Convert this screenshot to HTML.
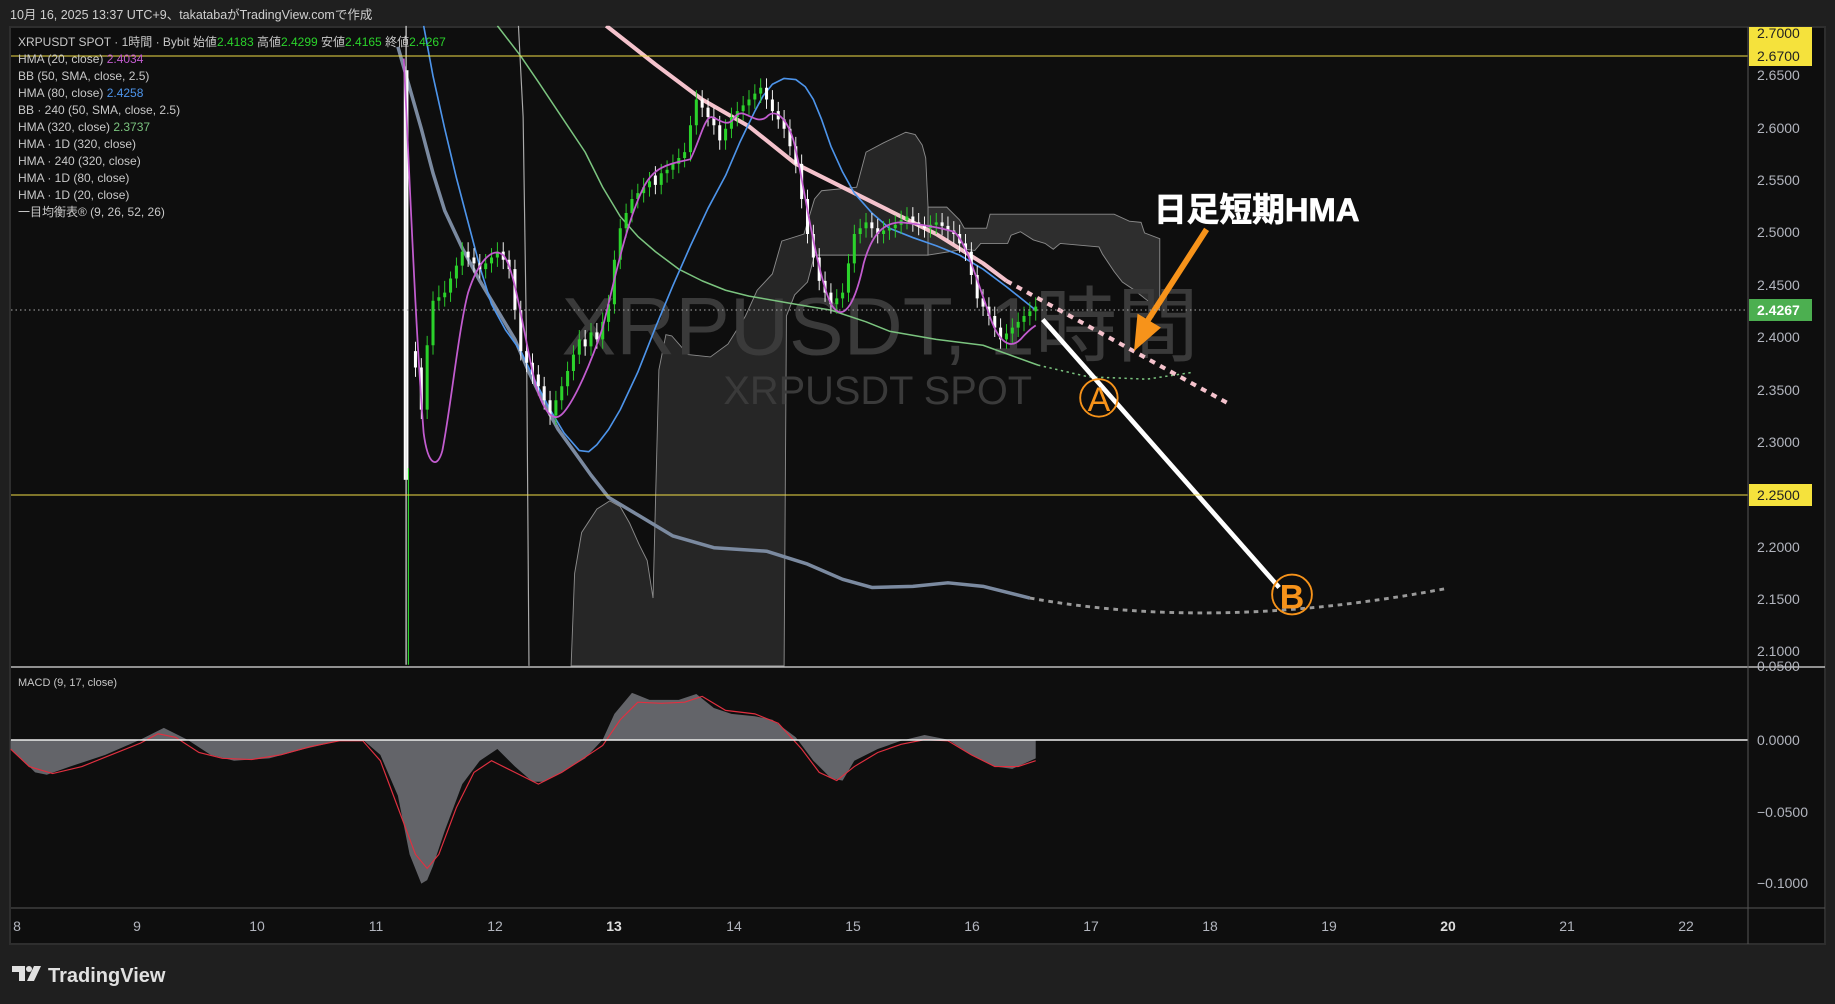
<!DOCTYPE html>
<html><head><meta charset="utf-8"><style>
html,body{margin:0;padding:0;background:#1f1f1f;width:1835px;height:1004px;overflow:hidden}
svg{display:block}
text{font-family:"Liberation Sans","Noto Sans CJK JP",sans-serif}
</style></head><body>
<svg width="1835" height="1004" viewBox="0 0 1835 1004" xmlns="http://www.w3.org/2000/svg">
<defs>
<clipPath id="cp"><rect x="9" y="22" width="1484" height="548"/></clipPath>
<clipPath id="cm"><rect x="9" y="571" width="1484" height="205"/></clipPath>
</defs>
<rect width="1835" height="1004" fill="#1f1f1f"/>
<rect x="10" y="27" width="1815" height="917" fill="#0e0e0e" stroke="#2e2e2e" stroke-width="2"/>
<text x="10" y="19" font-size="12.5" fill="#cfcfcf">10月 16, 2025 13:37 UTC+9、takatabaがTradingView.comで作成</text>

<g transform="scale(1.1703)">
<g clip-path="url(#cp)">
<polygon fill="#262626" stroke="#8a8a8a" stroke-width="0.8" points="488,569 491,490 497,455 510,435 521,428 530,433 538,447 546,465 553,479 558,511 563,316 569,286 574,287 588,303 607,305 622,294 637,270 647,248 660,234 664,220 668,206 687,200 696,170 702,163 732,160 740,130 755,122 774,113 782,115 788,124 791,135 793,177 793,218 696,218 690,241 679,252 672,270 670,569"/>
<polygon fill="#2e2e2e" stroke="#8a8a8a" stroke-width="0.8" points="793,177 809,177 820,188 824,195 843,195 846,183 952,183 965,189 975,190 978,199 991,204 991,265 982,258 968,247 959,241 952,232 942,217 939,211 906,208 900,213 893,208 883,205 872,198 864,201 861,208 838,208 833,214 824,213 793,218"/>
<polyline fill="none" stroke="#aaa" stroke-width="1" points="443,22 447,100 450,300 452,569"/>
<text x="752" y="303" font-size="70" fill="#3a3a3a" text-anchor="middle">XRPUSDT, 1時間</text>
<text x="750" y="345" font-size="34" fill="#3a3a3a" text-anchor="middle">XRPUSDT SPOT</text>
<polyline fill="none" stroke="#7bc47f" stroke-width="1.3" stroke-linejoin="round" points="425,22 445,48 460,70 480,100 500,130 515,160 530,185 545,202 560,215 580,230 600,240 620,248 640,253 680,260 710,265 740,275 760,283 800,290 840,295 887,312"/>
<polyline fill="none" stroke="#7bc47f" stroke-width="1.3" stroke-dasharray="2,3" points="887,312 930,322 980,324 1020,318"/>
<polyline fill="none" stroke="#7b8aa0" stroke-width="3" stroke-linejoin="round" points="340,40 350,75 360,110 370,148 380,180 395,212 410,240 425,265 440,290 452,318 465,345 477,367 490,385 505,406 520,425 545,440 575,458 610,468 655,471 690,482 720,495 745,502 780,501 810,498 840,501 880,511"/>
<path d="M880,511 Q1040,540 1235,503" fill="none" stroke="#9a9a9a" stroke-width="2.5" stroke-dasharray="4,4"/>
<polyline fill="none" stroke="#f4c2cc" stroke-width="3.5" stroke-linejoin="round" points="518,22 560,55 600,85 640,108 680,140 720,160 760,180 800,200 840,225 860,240"/>
<line x1="860" y1="240" x2="1050" y2="345" stroke="#f4c2cc" stroke-width="3.5" stroke-dasharray="5,5"/>
<polyline fill="none" stroke="#4d94ea" stroke-width="1.4" stroke-linejoin="round" points="362,22 370,65 380,110 390,152 400,190 410,228 420,260 432,282 445,300 458,327 470,350 482,370 495,385 503,386 510,380 520,367 530,350 545,318 560,280 575,244 590,210 605,178 620,150 632,122 645,95 652,82 660,72 670,67 680,68 688,74 695,85 702,102 710,125 720,147 730,165 745,182 760,195 780,203 800,210 820,218 840,230 860,245 885,265"/>
<path fill="none" stroke="#2bd22b" stroke-width="0.8" d="M365 287V358M370 249V303M375 244V265M380 240V262M385 232V258M390 220V246M395 207V235M415 217V238M420 212V233M425 207V228M475 334V363M480 322V350M485 309V338M490 295V325M495 282V311M505 276V304M515 267V298M520 252V283M525 214V268M530 187V230M535 174V203M540 162V190M545 157V178M550 152V173M555 147V168M565 140V166M570 137V156M575 132V153M580 127V148M585 122V143M590 99V138M595 77V115M620 102V128M625 92V118M630 87V108M635 82V103M640 77V98M645 72V93M650 67V88M715 247V268M720 242V263M725 217V258M730 192V233M735 187V208M740 182V203M755 189V208M760 187V205M765 184V203M770 180V200M775 177V196M795 184V203M800 182V200M860 277V298M865 272V293M870 267V288M875 262V283M880 258V278M885 254V274"/>
<path fill="none" stroke="#2bd22b" stroke-width="2.6" d="M365 295V350M370 257V295M375 254V257M380 250V254M385 238V250M390 227V238M395 215V227M415 225V230M420 220V225M425 215V220M475 342V355M480 330V342M485 317V330M490 303V317M495 290V303M505 284V296M515 275V290M520 260V275M525 222V260M530 195V222M535 182V195M540 170V182M545 165V170M550 160V165M555 155V160M565 148V158M570 145V148M575 140V145M580 135V140M585 130V135M590 107V130M595 85V107M620 110V120M625 100V110M630 95V100M635 90V95M640 85V90M645 80V85M650 75V80M715 255V260M720 250V255M725 225V250M730 200V225M735 195V200M740 190V195M755 197V200M760 195V197M765 192V195M770 188V192M775 185V188M795 192V195M800 190V192M860 285V290M865 280V285M870 275V280M875 270V275M880 266V270M885 262V266"/>
<path fill="none" stroke="#ffffff" stroke-width="0.8" d="M355 292V322M360 306V358M400 207V228M405 212V233M410 217V238M430 207V230M435 214V238M440 222V273M445 257V308M450 292V318M455 302V328M460 312V338M465 322V350M470 334V363M500 282V304M510 276V298M560 142V166M600 77V100M605 84V108M610 92V115M615 99V128M655 67V93M660 77V103M665 87V110M670 94V118M675 102V133M680 117V148M685 132V178M690 162V208M695 192V228M700 212V248M705 232V258M710 242V268M745 182V203M750 187V208M780 177V198M785 182V201M790 185V203M805 182V201M810 185V205M815 189V208M820 192V216M825 200V223M830 207V243M835 227V263M840 247V270M845 254V278M850 262V288M855 272V298"/>
<path fill="none" stroke="#ffffff" stroke-width="2.6" d="M355 300V314M360 314V350M400 215V220M405 220V225M410 225V230M430 215V222M435 222V230M440 230V265M445 265V300M450 300V310M455 310V320M460 320V330M465 330V342M470 342V355M500 290V296M510 284V290M560 150V158M600 85V92M605 92V100M610 100V107M615 107V120M655 75V85M660 85V95M665 95V102M670 102V110M675 110V125M680 125V140M685 140V170M690 170V200M695 200V220M700 220V240M705 240V250M710 250V260M745 190V195M750 195V200M780 185V190M785 190V193M790 193V195M805 190V193M810 193V197M815 197V200M820 200V208M825 208V215M830 215V235M835 235V255M840 255V262M845 262V270M850 270V280M855 280V290"/>
<rect x="345" y="60" width="4" height="350" fill="#fff"/>
<line x1="349" y1="400" x2="349" y2="568" stroke="#2bd22b" stroke-width="1"/>
<line x1="347" y1="22" x2="347" y2="568" stroke="#ddd" stroke-width="1"/>
<path fill="none" stroke="#c25ccf" stroke-width="1.5" stroke-linejoin="round" d="M345,50 C350,150 355,280 362,370 C366,400 374,400 378,385 C385,350 392,280 400,250 C408,225 420,210 430,218 C440,228 448,290 458,330 C466,355 474,362 482,352 C492,340 505,310 515,280 C525,240 535,190 550,160 C560,140 575,140 590,136 C598,120 602,100 608,100 C615,102 622,110 628,100 C635,90 645,108 655,100 C662,92 672,100 678,120 C686,150 695,220 708,255 C716,275 728,272 738,225 C745,200 755,190 770,190 C790,192 805,195 815,198 C825,205 835,240 845,268 C852,290 862,300 872,290 C878,283 882,280 885,278"/>
<line x1="891" y1="273" x2="1093" y2="502" stroke="#fff" stroke-width="4"/>
<circle cx="939" cy="340" r="16" fill="none" stroke="#f7931a" stroke-width="1.6"/>
<text x="939" y="351" font-size="29" fill="#f7931a" text-anchor="middle">A</text>
<circle cx="1104" cy="508" r="17" fill="none" stroke="#f7931a" stroke-width="1.6"/>
<text x="1104" y="520" font-size="29" fill="#f7931a" text-anchor="middle" font-weight="bold">B</text>
<path d="M1031,196 L980,275" stroke="#f7931a" stroke-width="5"/>
<polygon points="969,300 972,268 992,280" fill="#f7931a"/>
<text x="986" y="189" font-size="28" font-weight="bold" fill="#fff" stroke="#fff" stroke-width="0.6">日足短期HMA</text>
</g>
<g clip-path="url(#cm)">
<path fill="#636469" d="M9,632 L9,640 20,650 30,660 40,662 60,655 90,645 120,632 140,622 160,632 180,645 200,650 230,648 260,640 290,633 310,632 325,645 340,680 350,730 360,755 365,752 370,740 380,710 395,670 410,650 425,640 440,655 455,668 465,668 480,660 500,648 515,632 525,610 540,592 555,598 580,598 595,593 610,605 625,610 645,612 660,615 680,630 695,650 710,665 720,667 730,650 750,640 770,633 790,628 810,632 830,645 850,655 865,657 885,648 885,632 Z"/>
<polyline fill="none" stroke="#e03040" stroke-width="1" points="9,640 25,655 45,661 70,655 95,645 120,635 135,627 150,630 170,643 190,648 215,649 240,645 265,638 290,633 310,633 325,650 340,690 355,730 365,742 375,730 390,690 405,660 420,650 440,660 460,670 480,660 500,647 515,637 530,615 545,600 565,601 585,600 600,595 620,607 645,610 665,618 685,640 700,660 715,667 730,655 750,643 770,636 790,632 810,633 830,645 850,655 870,655 885,650"/>
</g>
</g>

<line x1="11" y1="56" x2="1748" y2="56" stroke="#f0dc46" stroke-width="1"/>
<line x1="11" y1="495" x2="1748" y2="495" stroke="#f0dc46" stroke-width="1"/>
<line x1="11" y1="310" x2="1748" y2="310" stroke="#aaa" stroke-width="1" stroke-dasharray="1.5,3"/>
<line x1="11" y1="667" x2="1825" y2="667" stroke="#ddd" stroke-width="1.2"/>
<line x1="11" y1="740" x2="1748" y2="740" stroke="#eee" stroke-width="1.5"/>
<line x1="11" y1="908" x2="1825" y2="908" stroke="#555" stroke-width="1"/>
<line x1="1748" y1="27" x2="1748" y2="944" stroke="#555" stroke-width="1"/>

<g font-size="12" fill="#c8c8c8">
<text x="18" y="46">XRPUSDT SPOT · 1時間 · Bybit  始値<tspan fill="#2bd22b">2.4183</tspan>  高値<tspan fill="#2bd22b">2.4299</tspan>  安値<tspan fill="#2bd22b">2.4165</tspan>  終値<tspan fill="#2bd22b">2.4267</tspan></text>
<text x="18" y="63">HMA (20, close)  <tspan fill="#c25ccf">2.4034</tspan></text>
<text x="18" y="80">BB (50, SMA, close, 2.5)</text>
<text x="18" y="97">HMA (80, close)  <tspan fill="#4d94ea">2.4258</tspan></text>
<text x="18" y="114">BB · 240 (50, SMA, close, 2.5)</text>
<text x="18" y="131">HMA (320, close)  <tspan fill="#7bc47f">2.3737</tspan></text>
<text x="18" y="148">HMA · 1D (320, close)</text>
<text x="18" y="165">HMA · 240 (320, close)</text>
<text x="18" y="182">HMA · 1D (80, close)</text>
<text x="18" y="199">HMA · 1D (20, close)</text>
<text x="18" y="216">一目均衡表® (9, 26, 52, 26)</text>
<text x="18" y="686" font-size="11">MACD (9, 17, close)</text>
</g>

<rect x="1749" y="27" width="63" height="20" fill="#f5e23c"/>
<rect x="1749" y="46" width="63" height="20" fill="#f5e23c"/>
<rect x="1749" y="299" width="63" height="22" fill="#4caf50"/>
<rect x="1749" y="484" width="63" height="22" fill="#f5e23c"/>
<g font-size="14" fill="#b2b5be">
<text x="1757" y="38" fill="#222">2.7000</text>
<text x="1757" y="61" fill="#222">2.6700</text>
<text x="1757" y="80">2.6500</text>
<text x="1757" y="133">2.6000</text>
<text x="1757" y="185">2.5500</text>
<text x="1757" y="237">2.5000</text>
<text x="1757" y="290">2.4500</text>
<text x="1757" y="315" fill="#fff" font-weight="bold">2.4267</text>
<text x="1757" y="342">2.4000</text>
<text x="1757" y="395">2.3500</text>
<text x="1757" y="447">2.3000</text>
<text x="1757" y="500" fill="#222">2.2500</text>
<text x="1757" y="552">2.2000</text>
<text x="1757" y="604">2.1500</text>
<text x="1757" y="656">2.1000</text>
<text x="1757" y="671">0.0500</text>
<text x="1757" y="745">0.0000</text>
<text x="1757" y="817">−0.0500</text>
<text x="1757" y="888">−0.1000</text>
</g>
<g font-size="14" fill="#b2b5be" text-anchor="middle">
<text x="17" y="931">8</text><text x="137" y="931">9</text><text x="257" y="931">10</text><text x="376" y="931">11</text><text x="495" y="931">12</text><text x="614" y="931" font-weight="bold" fill="#ddd">13</text><text x="734" y="931">14</text><text x="853" y="931">15</text><text x="972" y="931">16</text><text x="1091" y="931">17</text><text x="1210" y="931">18</text><text x="1329" y="931">19</text><text x="1448" y="931" font-weight="bold" fill="#ddd">20</text><text x="1567" y="931">21</text><text x="1686" y="931">22</text>
</g>
<g fill="#e0e0e0">
<path d="M12,966 h13 v15 h-6 v-9 h-7z"/>
<circle cx="29" cy="969" r="3"/>
<path d="M34,966 h7 l-7,15 h-7z"/>
</g>
<text x="48" y="982" font-size="20" font-weight="bold" fill="#e0e0e0">TradingView</text>
</svg>
</body></html>
